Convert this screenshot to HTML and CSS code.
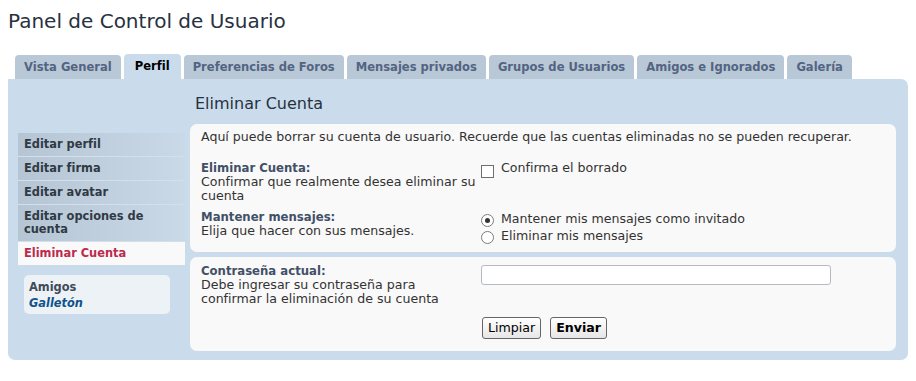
FILE: index.html
```html
<!DOCTYPE html>
<html lang="es">
<head>
<meta charset="utf-8">
<title>Panel de Control de Usuario</title>
<link rel="stylesheet" href="styles.css">
</head>
<body>
<h1 class="page-title">Panel de Control de Usuario</h1>
<ul class="tabs">
  <li class="tab">Vista General</li>
  <li class="tab active">Perfil</li>
  <li class="tab">Preferencias de Foros</li>
  <li class="tab">Mensajes privados</li>
  <li class="tab">Grupos de Usuarios</li>
  <li class="tab">Amigos e Ignorados</li>
  <li class="tab">Galería</li>
</ul>
<div class="panel">
  <div class="sidebar">
    <ul class="menu">
      <li class="menu-item">Editar perfil</li>
      <li class="menu-item">Editar firma</li>
      <li class="menu-item">Editar avatar</li>
      <li class="menu-item">Editar opciones de cuenta</li>
      <li class="menu-item current">Eliminar Cuenta</li>
    </ul>
    <div class="friends">
      <div class="friends-title">Amigos</div>
      <div class="friend">Galletón</div>
    </div>
  </div>
  <div class="main">
    <h2 class="section-title">Eliminar Cuenta</h2>
    <div class="box box-first">
      <p class="intro">Aquí puede borrar su cuenta de usuario. Recuerde que las cuentas eliminadas no se pueden recuperar.</p>
      <div class="row row-delete">
        <div class="label"><strong>Eliminar Cuenta:</strong><br>Confirmar que realmente desea eliminar su cuenta</div>
        <div class="field">
          <label class="check"><span class="checkbox"></span>Confirma el borrado</label>
        </div>
      </div>
      <div class="row row-keep">
        <div class="label"><strong>Mantener mensajes:</strong><br>Elija que hacer con sus mensajes.</div>
        <div class="field">
          <label class="radio-line"><span class="radio checked"></span>Mantener mis mensajes como invitado</label>
          <label class="radio-line"><span class="radio"></span>Eliminar mis mensajes</label>
        </div>
      </div>
    </div>
    <div class="box box-second">
      <div class="row">
        <div class="label"><strong>Contraseña actual:</strong><br>Debe ingresar su contraseña para<br>confirmar la eliminación de su cuenta</div>
        <div class="field"><span class="text-input"></span></div>
      </div>
      <div class="row row-buttons">
        <div class="label"></div>
        <div class="field buttons">
          <span class="button">Limpiar</span>
          <span class="button button-primary">Enviar</span>
        </div>
      </div>
    </div>
  </div>
</div>
</body>
</html>
```
FILE: styles.css
```css
html, body {
  margin: 0;
  padding: 0;
  background: #ffffff;
}
body {
  padding: 8px;
  font-family: "DejaVu Sans", Verdana, sans-serif;
  color: #333333;
  font-size: 12.6px;
}
.page-title {
  margin: 0;
  height: 46px;
  font-size: 20px;
  line-height: 26px;
  font-weight: normal;
  color: #28313f;
}
.tabs {
  list-style: none;
  margin: 0;
  padding: 0 0 0 7px;
  display: flex;
  align-items: flex-end;
  gap: 3px;
  height: 25px;
}
.tab {
  height: 24px;
  line-height: 24px;
  padding: 0 9px;
  background: #b8c8d7;
  border-radius: 4px 4px 0 0;
  font-size: 11.55px;
  font-weight: bold;
  color: #536482;
}
.tab.active {
  height: 25px;
  padding: 0 11px;
  background: #cadceb;
  color: #000000;
}
.panel {
  background: #cadceb;
  border-radius: 0 7px 7px 7px;
  display: flex;
  gap: 5px;
  padding: 10px 12px 9px 10px;
}
.sidebar {
  width: 167px;
  flex: none;
  padding-top: 44px;
}
.menu {
  list-style: none;
  margin: 0;
  padding: 0;
}
.menu-item {
  padding: 5px 6px;
  line-height: 13px;
  font-size: 11.4px;
  font-weight: bold;
  color: #2f3a45;
  background: linear-gradient(to right, #b6c5d3, #c9d9e7);
  border-bottom: 1px solid #d3dfea;
}
.menu-item.current {
  background: #f9f9f9;
  color: #bc2a4d;
  border-bottom: none;
}
.friends {
  margin: 10px 15px 0 6px;
  background: #edf2f7;
  border-radius: 5px;
  padding: 4px 5px 3px;
  font-size: 11.4px;
  font-weight: bold;
  line-height: 16px;
}
.friends-title {
  color: #3f4a5a;
}
.friend {
  color: #105289;
  font-style: italic;
}
.main {
  flex: 1;
}
.section-title {
  margin: 5px 0 10px 5px;
  font-size: 16px;
  line-height: 20px;
  font-weight: normal;
  color: #28313f;
}
.box {
  background: #f9f9f9;
  border-radius: 7px;
  padding: 6px 10px 8px 11px;
  line-height: 14px;
}
.box-second {
  margin-top: 5px;
  padding-top: 7px;
  padding-bottom: 12px;
}
.intro {
  margin: 0 0 17px 0;
}
.row {
  display: flex;
}
.row-keep {
  margin-top: 7px;
}
.label {
  width: 280px;
  flex: none;
}
.label strong {
  font-size: 11.7px;
  color: #425067;
}
.field {
  flex: 1;
}
.check {
  display: flex;
  align-items: flex-start;
  gap: 7px;
}
.checkbox {
  width: 11px;
  height: 11px;
  margin-top: 4px;
  border: 1px solid #6f6f6f;
  background: #ffffff;
}
.radio-line {
  display: flex;
  align-items: center;
  gap: 7px;
  height: 17px;
}
.radio {
  width: 11px;
  height: 11px;
  margin-top: 3px;
  border: 1px solid #7a7a7a;
  border-radius: 50%;
  background: #ffffff;
  display: flex;
  align-items: center;
  justify-content: center;
}
.radio.checked::after {
  content: "";
  width: 5px;
  height: 5px;
  border-radius: 50%;
  background: #333333;
}
.text-input {
  display: block;
  width: 348px;
  height: 18px;
  margin-top: 1px;
  border: 1px solid #b4bac0;
  border-radius: 3px;
  background: #ffffff;
}
.row-buttons {
  margin-top: 11px;
}
.buttons {
  display: flex;
  gap: 9px;
  padding-left: 1px;
}
.button {
  height: 20px;
  line-height: 20px;
  padding: 0 5px;
  border: 1px solid #666666;
  border-radius: 3px;
  background: linear-gradient(#ffffff, #e6e6e6);
  color: #000000;
  font-size: 12.6px;
}
.button-primary {
  font-weight: bold;
}
```
